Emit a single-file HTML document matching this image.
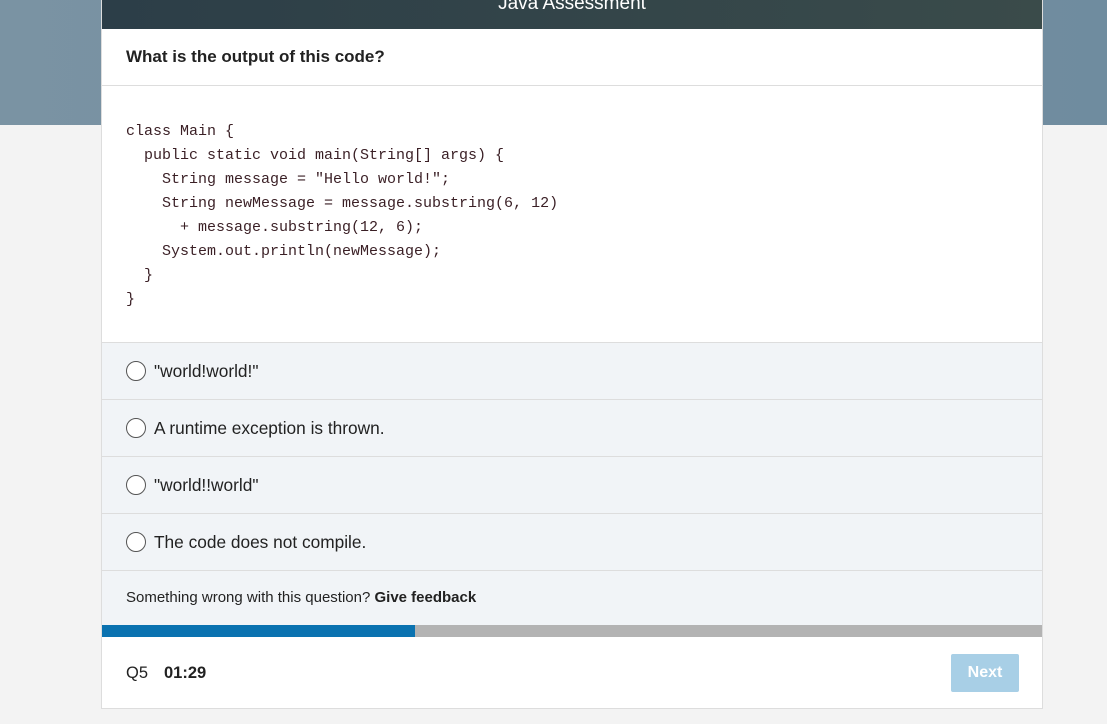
<!DOCTYPE html>
<html><head><style>
body{margin:0;width:1107px;height:724px;background:#f3f3f3;font-family:"Liberation Sans",sans-serif;position:relative;overflow:hidden}
.band{position:absolute;left:0;top:0;width:1107px;height:125px;background:linear-gradient(90deg,#7a93a3,#6f8c9f)}
.card{position:absolute;left:101px;top:0;width:940px;height:708px;background:#fff;border:1px solid #ddd;border-top:none}
.hdr{height:29px;background:linear-gradient(90deg,#2c3e48,#3a4b4a);color:#fff;font-size:19px;text-align:center;line-height:8px;overflow:hidden}
.q{height:56px;border-bottom:1px solid #ddd;font-weight:bold;font-size:17px;color:#222;padding-left:24px;line-height:56px}
.code{height:256px;font-family:"Liberation Mono",monospace;font-size:15px;color:#3a1f25;padding-left:24px;padding-top:34px;box-sizing:border-box;white-space:pre;line-height:24px;position:relative}
.opt{height:56px;border-top:1px solid #ddd;background:#f1f4f7;font-size:17.3px;color:#222;line-height:56px;padding-left:52px;position:relative}
.opt:before{content:"";position:absolute;left:24px;top:18px;width:18px;height:18px;border:1px solid #555;border-radius:50%;background:#fff}
.fb{height:54px;border-top:1px solid #ddd;background:#f1f4f7;font-size:15px;color:#222;line-height:54px;padding-left:24px}
.bar{height:12px;background:#b3b3b3;position:relative}
.bar div{position:absolute;left:0;top:0;width:313px;height:12px;background:#0a72b0}
.foot{height:70px;position:relative;font-size:16.5px;color:#222}
.btn{position:absolute;right:23px;top:17px;width:68px;height:38px;background:#a8cfe6;color:#fff;font-weight:bold;font-size:16px;text-align:center;line-height:38px;border-radius:2px}
</style></head><body>
<div class="band"></div>
<div class="card">
<div class="hdr">Java Assessment</div>
<div class="q">What is the output of this code?</div>
<div class="code">class Main {
  public static void main(String[] args) {
    String message = "Hello world!";
    String newMessage = message.substring(6, 12)
      + message.substring(12, 6);
    System.out.println(newMessage);
  }
}</div>
<div class="opt">"world!world!"</div>
<div class="opt">A runtime exception is thrown.</div>
<div class="opt">"world!!world"</div>
<div class="opt">The code does not compile.</div>
<div class="fb">Something wrong with this question? <b>Give feedback</b></div>
<div class="bar"><div></div></div>
<div class="foot"><span style="position:absolute;left:24px;top:27px">Q5</span><b style="position:absolute;left:62px;top:27px">01:29</b><div class="btn">Next</div></div>
</div>
</body></html>
